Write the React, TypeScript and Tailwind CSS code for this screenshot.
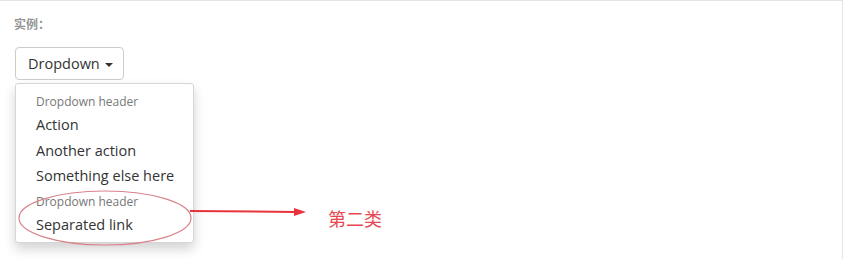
const FONT = "font-['Segoe_UI','Open_Sans','Noto_Sans','Noto_Sans_CJK_SC',sans-serif]";

const items = [
  { type: "header", label: "Dropdown header" },
  { type: "item", label: "Action" },
  { type: "item", label: "Another action" },
  { type: "item", label: "Something else here" },
  { type: "header", label: "Dropdown header" },
  { type: "item", label: "Separated link" },
];

export default function App() {
  return (
    <div className={`${FONT} h-[259px] w-[847px] bg-white`}>
      <div className="relative h-[259px] w-[843px] border-t border-r border-[#e5e5e5] px-[15px] pt-[16px]">
        <div className="-ml-px text-[12px] font-bold leading-[16px] text-[#959595]">实例：</div>

        <div className="mt-[14px] flex flex-col items-start">
          <button className="flex h-[33px] items-center gap-[5px] whitespace-nowrap rounded-[4px] border border-[#cccccc] bg-white pl-[12px] pr-[10px] text-[14.5px] text-[#333333]">
            Dropdown
            <span className="mt-[2px] h-0 w-0 border-t-[4px] border-r-[4px] border-l-[4px] border-t-[#333333] border-r-transparent border-l-transparent" />
          </button>

          <ul className="mt-[3px] w-[179px] rounded-[3px] border border-[#d6d6d6] bg-white py-[5px] shadow-[0_6px_12px_rgba(0,0,0,0.175)]">
            {items.map((it, i) =>
              it.type === "header" ? (
                <li key={i} className="whitespace-nowrap px-[20px] pt-[3px] text-[12px] leading-[20px] text-[#777777]">
                  {it.label}
                </li>
              ) : (
                <li key={i} className="whitespace-nowrap px-[20px] text-[14.5px] leading-[25.5px] text-[#333333]">
                  {it.label}
                </li>
              )
            )}
          </ul>
        </div>

        {/* annotation: ellipse, arrow and label */}
        <svg className="absolute left-0 top-0" width="420" height="259" viewBox="0 0 420 259">
          <ellipse cx="105" cy="217" rx="86" ry="27" fill="none" stroke="#d9828a" strokeWidth="1.2" />
          <line x1="190" y1="210" x2="296" y2="211" stroke="#e8333b" strokeWidth="2" />
          <polygon points="294,207 306,211 294,215" fill="#e8333b" />
        </svg>
        <div className="absolute left-[328px] top-[206px] text-[18px] leading-[24px] text-[#e8484f]">第二类</div>
      </div>
    </div>
  );
}
